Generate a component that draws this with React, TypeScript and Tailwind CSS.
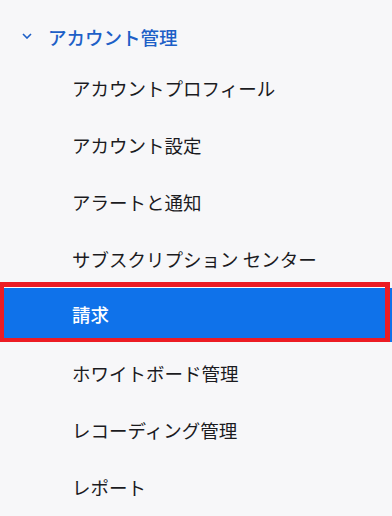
import React from "react";

const items = [
  "アカウントプロフィール",
  "アカウント設定",
  "アラートと通知",
  "サブスクリプション センター",
  "請求",
  "ホワイトボード管理",
  "レコーディング管理",
  "レポート",
];

export default function App() {
  return (
    <div
      className="relative w-[392px] h-[516px] overflow-hidden bg-[#f7f7f9]"
      style={{ fontFamily: '"Noto Sans CJK JP", "Noto Sans", sans-serif' }}
    >
      <div className="flex items-center h-[60px] pt-[14px]">
        <svg
          className="ml-[22px] mr-[16px] mb-[2px]"
          width="10"
          height="6"
          viewBox="0 0 10 6"
          fill="none"
        >
          <path d="M1 1 L5 5 L9 1" stroke="#1d5fc7" strokeWidth="1.6" />
        </svg>
        <span className="text-[18.5px] font-medium text-[#1d5fc7] leading-none">
          アカウント管理
        </span>
      </div>
      <div className="flex flex-col">
        {items.map((t, i) =>
          i === 4 ? (
            <div key={t} className="h-[57px]">
              <div className="h-[54px] bg-[#0f72ea] flex items-center pl-[72px] text-[18.5px] font-medium text-white">
                {t}
              </div>
            </div>
          ) : (
            <div
              key={t}
              className="h-[57px] flex items-center pl-[72px] text-[18.5px] text-[#1b1b1f]"
            >
              {t}
            </div>
          )
        )}
      </div>
      <div className="absolute left-0 top-[282px] w-[390px] h-[60px] border-t-[5px] border-r-[5px] border-b-4 border-l-4 border-[#ec1c24]">
        <div className="h-px bg-white/80" />
      </div>
    </div>
  );
}
